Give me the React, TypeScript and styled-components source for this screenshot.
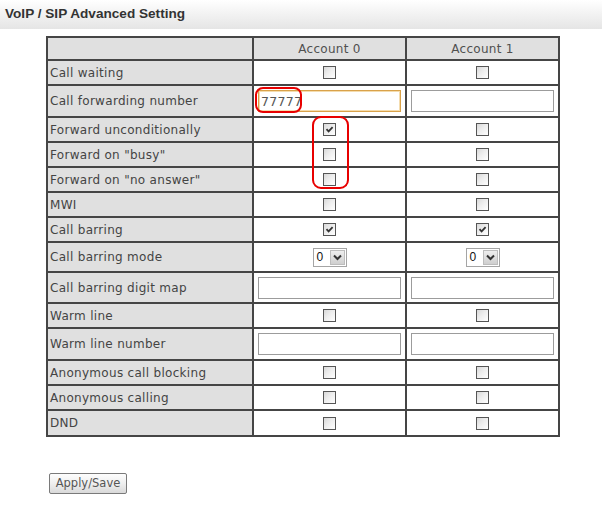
import React from "react";
import styled, { createGlobalStyle } from "styled-components";

const GlobalStyle = createGlobalStyle`
  html, body { margin: 0; padding: 0; background: #ffffff; }
  body { font-family: "DejaVu Sans", Verdana, sans-serif; }
`;

const Page = styled.div`
  width: 602px;
  min-height: 511px;
  background: #fff;
`;

const TitleBar = styled.div`
  height: 29px;
  background: linear-gradient(to bottom, #ffffff 0%, #f3f3f3 45%, #e5e5e5 100%);
  display: flex;
  align-items: center;
  padding-left: 5px;
  padding-bottom: 2px;
  box-sizing: border-box;
`;

const Title = styled.h1`
  margin: 0;
  font-family: "Liberation Sans", Arial, sans-serif;
  font-weight: bold;
  font-size: 13.6px;
  color: #333;
`;

const Content = styled.div`
  padding: 7px 0 0 46px;
`;

const TableWrap = styled.div`
  position: relative;
  width: 514px;
`;

const Table = styled.table`
  border-collapse: collapse;
  width: 514px;
  table-layout: fixed;
  font-size: 12px;
  letter-spacing: 0.3px;
  color: #444;
`;

const HeadCell = styled.th`
  border: 2px solid #454545;
  background: #e0e0e0;
  font-weight: normal;
  text-align: center;
  height: 21px;
  padding: 0;
  color: #505050;
`;

const LabelCell = styled.td<{ $h: number }>`
  border: 2px solid #454545;
  background: #e0e0e0;
  padding: 0 0 0 2px;
  height: ${(p) => p.$h}px;
  white-space: nowrap;
`;

const ValueCell = styled.td`
  border: 2px solid #454545;
  background: #fff;
  text-align: center;
  padding: 0;
  line-height: 0;
`;

const BoxOuter = styled.span`
  display: inline-block;
  position: relative;
  width: 11px;
  height: 11px;
  border: 1px solid #555;
  background: linear-gradient(135deg, #d8d8d8 0%, #ededed 45%, #ffffff 100%);
  vertical-align: middle;
`;

const CheckSvg = styled.svg`
  position: absolute;
  left: 1px;
  top: 1px;
`;

const Checkbox = ({ checked }: { checked?: boolean }) => (
  <BoxOuter>
    {checked && (
      <CheckSvg width="9" height="9" viewBox="0 0 9 9">
        <path d="M1.5 4.2 L3.6 6.4 L7.6 2.2" stroke="#333" strokeWidth="1.8" fill="none" />
      </CheckSvg>
    )}
  </BoxOuter>
);

const TextInput = styled.input<{ $focus?: boolean }>`
  box-sizing: border-box;
  width: 143px;
  height: 22px;
  margin: 0;
  padding: 1px 2px;
  border: 1px solid ${(p) => (p.$focus ? "#d9a24a" : "#9c9c9c")};
  box-shadow: ${(p) => (p.$focus ? "inset 0 0 0 1px #f4dcae" : "none")};
  font-family: "DejaVu Sans", Verdana, sans-serif;
  font-size: 12.5px;
  letter-spacing: 0.3px;
  color: #555;
  outline: none;
  background: #fff;
  vertical-align: middle;
`;

const SelectBox = styled.span`
  display: inline-flex;
  box-sizing: border-box;
  height: 19px;
  width: 34px;
  border: 1px solid #a5a5a5;
  background: #fff;
  vertical-align: middle;
  line-height: 17px;
`;

const SelectValue = styled.span`
  flex: 1;
  font-family: "Liberation Sans", Arial, sans-serif;
  font-size: 12px;
  color: #111;
  text-align: left;
  padding-left: 3px;
  letter-spacing: 0;
`;

const SelectArrow = styled.span`
  width: 15px;
  height: 15px;
  margin: 1px;
  border: 1px solid #bdbdbd;
  box-sizing: border-box;
  background: linear-gradient(to bottom, #eeeeee, #cfcfcf);
  display: flex;
  align-items: center;
  justify-content: center;
`;

const Select = ({ value }: { value: string }) => (
  <SelectBox>
    <SelectValue>{value}</SelectValue>
    <SelectArrow>
      <svg width="9" height="7" viewBox="0 0 9 7">
        <path d="M1 1.5 L4.5 5 L8 1.5" stroke="#333" strokeWidth="2" fill="none" />
      </svg>
    </SelectArrow>
  </SelectBox>
);

const Annotation = styled.div<{ $l: number; $t: number; $w: number; $h: number; $r: number }>`
  position: absolute;
  left: ${(p) => p.$l}px;
  top: ${(p) => p.$t}px;
  width: ${(p) => p.$w}px;
  height: ${(p) => p.$h}px;
  border: 2px solid #e80000;
  border-radius: ${(p) => p.$r}px;
  box-sizing: border-box;
  pointer-events: none;
`;

const Footer = styled.div`
  padding: 35px 0 0 49px;
`;

const Button = styled.button`
  box-sizing: border-box;
  width: 78px;
  height: 21px;
  padding: 0;
  border: 1px solid #7a7a7a;
  border-radius: 2px;
  background: linear-gradient(to bottom, #fdfdfd 0%, #efefef 50%, #d9d9d9 100%);
  font-family: "DejaVu Sans", Tahoma, sans-serif;
  font-size: 11.5px;
  color: #555;
`;

type Cell =
  | { kind: "check"; checked?: boolean }
  | { kind: "text"; value?: string; focus?: boolean }
  | { kind: "select"; value: string };

type Row = { label: string; h: number; cells: [Cell, Cell] };

const rows: Row[] = [
  { label: "Call waiting", h: 23, cells: [{ kind: "check" }, { kind: "check" }] },
  { label: "Call forwarding number", h: 30, cells: [{ kind: "text", value: "77777", focus: true }, { kind: "text" }] },
  { label: "Forward unconditionally", h: 23, cells: [{ kind: "check", checked: true }, { kind: "check" }] },
  { label: 'Forward on "busy"', h: 23, cells: [{ kind: "check" }, { kind: "check" }] },
  { label: 'Forward on "no answer"', h: 23, cells: [{ kind: "check" }, { kind: "check" }] },
  { label: "MWI", h: 23, cells: [{ kind: "check" }, { kind: "check" }] },
  { label: "Call barring", h: 23, cells: [{ kind: "check", checked: true }, { kind: "check", checked: true }] },
  { label: "Call barring mode", h: 28, cells: [{ kind: "select", value: "0" }, { kind: "select", value: "0" }] },
  { label: "Call barring digit map", h: 29, cells: [{ kind: "text" }, { kind: "text" }] },
  { label: "Warm line", h: 23, cells: [{ kind: "check" }, { kind: "check" }] },
  { label: "Warm line number", h: 30, cells: [{ kind: "text" }, { kind: "text" }] },
  { label: "Anonymous call blocking", h: 23, cells: [{ kind: "check" }, { kind: "check" }] },
  { label: "Anonymous calling", h: 23, cells: [{ kind: "check" }, { kind: "check" }] },
  { label: "DND", h: 24, cells: [{ kind: "check" }, { kind: "check" }] },
];

const renderCell = (c: Cell) => {
  if (c.kind === "check") return <Checkbox checked={c.checked} />;
  if (c.kind === "select") return <Select value={c.value} />;
  return <TextInput $focus={c.focus} defaultValue={c.value ?? ""} />;
};

export default function App() {
  return (
    <Page>
      <GlobalStyle />
      <TitleBar>
        <Title>VoIP / SIP Advanced Setting</Title>
      </TitleBar>
      <Content>
        <TableWrap>
          <Table>
            <colgroup>
              <col style={{ width: 206 }} />
              <col style={{ width: 153 }} />
              <col style={{ width: 153 }} />
            </colgroup>
            <thead>
              <tr>
                <HeadCell />
                <HeadCell>Account 0</HeadCell>
                <HeadCell>Account 1</HeadCell>
              </tr>
            </thead>
            <tbody>
              {rows.map((r) => (
                <tr key={r.label}>
                  <LabelCell $h={r.h}>{r.label}</LabelCell>
                  <ValueCell>{renderCell(r.cells[0])}</ValueCell>
                  <ValueCell>{renderCell(r.cells[1])}</ValueCell>
                </tr>
              ))}
            </tbody>
          </Table>
          <Annotation $l={209} $t={51} $w={47} $h={26} $r={8} />
          <Annotation $l={266} $t={80} $w={37} $h={73} $r={9} />
        </TableWrap>
      </Content>
      <Footer>
        <Button>Apply/Save</Button>
      </Footer>
    </Page>
  );
}
